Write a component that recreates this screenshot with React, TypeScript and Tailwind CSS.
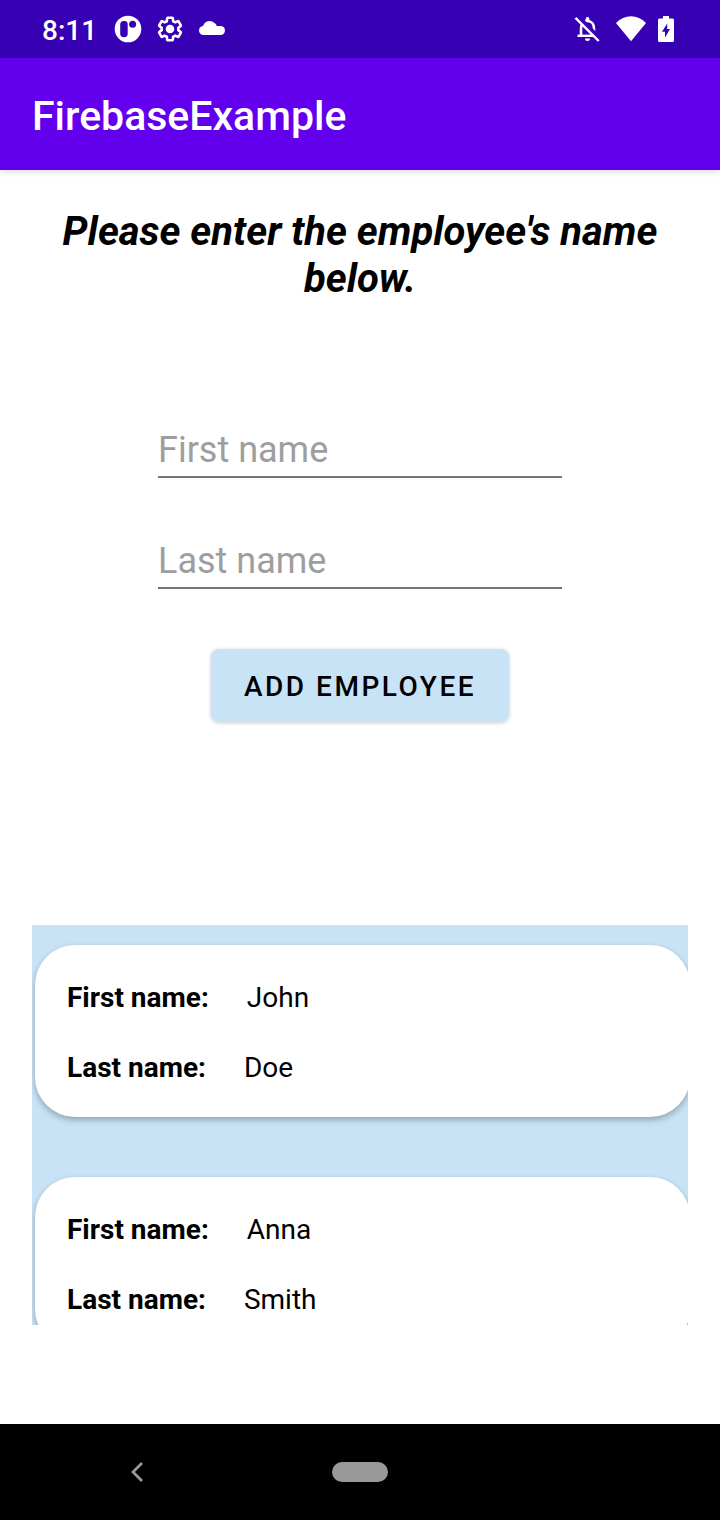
const employees = [
  { first: "John", last: "Doe" },
  { first: "Anna", last: "Smith" },
];

function StatusBar() {
  return (
    <header className="flex h-[58px] items-center justify-between bg-[#3700b3] pr-[46px] pl-[42px] text-white">
      <div className="flex items-center">
        <span className="w-[72px] pt-[3px] text-[28px] leading-8 font-medium">8:11</span>
        <svg className="mr-[14px] size-7" viewBox="0 0 28 28" aria-hidden="true">
          <circle cx="14" cy="14" r="13.3" fill="white" />
          <path d="M6.200 9.500Q6.200 6 9.700 6H10.500Q13.700 6 13.700 9.200V18.600A3.750 3.750 0 0 1 6.200 18.600Z" fill="#3700b3" />
          <circle cx="18.600" cy="9.300" r="3.500" fill="#3700b3" />
        </svg>
        <svg className="mr-[14px] size-7" viewBox="0 0 24 24" fill="none" aria-hidden="true">
          <path
            d="M19.430 12.980c.04-.32.07-.64.07-.98s-.03-.66-.07-.98l2.110-1.650c.19-.15.24-.42.120-.64l-2-3.460c-.12-.22-.39-.3-.61-.22l-2.490 1c-.52-.4-1.080-.73-1.690-.98l-.38-2.650A.488.488 0 0 0 14 2h-4c-.25 0-.46.18-.49.42l-.38 2.650c-.61.25-1.170.59-1.690.98l-2.490-1c-.23-.09-.49 0-.61.22l-2 3.460c-.13.22-.07.49.12.64l2.110 1.650c-.04.32-.07.65-.07.98s.03.66.07.98l-2.110 1.650c-.19.15-.24.42-.12.64l2 3.460c.12.22.39.3.61.22l2.490-1c.52.4 1.080.73 1.690.98l.38 2.650c.03.24.24.42.49.42h4c.25 0 .46-.18.49-.42l.38-2.650c.61-.25 1.170-.59 1.690-.98l2.490 1c.23.09.49 0 .61-.22l2-3.460c.12-.22.07-.49-.12-.64z"
            stroke="white"
            strokeWidth="2.300"
            transform="translate(12 12) scale(.96) translate(-12 -12)"
          />
          <circle cx="12" cy="12" r="3.700" fill="white" />
        </svg>
        <svg className="size-7" viewBox="0 0 28 28" fill="white" aria-hidden="true">
          <circle cx="5.500" cy="15.500" r="4.500" />
          <circle cx="11.600" cy="12.800" r="6.900" />
          <circle cx="22.500" cy="15.500" r="4.500" />
          <path d="M5.500 20V13L16.500 8Q18.300 9.200 18.800 11.100L22.500 11V20Z" />
        </svg>
      </div>
      <div className="flex items-center">
        <svg className="mr-4 h-[26px] w-[26px]" viewBox="0 0 26 26" fill="none" aria-hidden="true">
          <path d="M7 19V12.500C7 8 9.600 5 13.500 5S20 8 20 12.500V19" stroke="white" strokeWidth="2.600" />
          <path d="M3.500 19.800H23.500" stroke="white" strokeWidth="2.400" />
          <path d="M11.600 5V2.900a1.900 1.900 0 0 1 3.800 0V5Z" fill="white" />
          <path d="M11 22.500h5a2.500 2.500 0 0 1-5 0Z" fill="white" />
          <path d="M4 .5L27.500 24" stroke="#3700b3" strokeWidth="4" />
          <path d="M1.500 1.800L24.700 25" stroke="white" strokeWidth="2.400" />
        </svg>
        <svg className="mr-3 h-[26px] w-[30px]" viewBox="0 0 30 26" fill="white" aria-hidden="true">
          <path d="M0 7C8.500-1.900 21.500-1.900 30 7L15 25.300Z" />
        </svg>
        <svg className="h-[26px] w-4" viewBox="0 0 16 26" aria-hidden="true">
          <path d="M5 0h6v2.600h3.500Q16 2.600 16 4.100V24.500Q16 26 14.500 26H1.500Q0 26 0 24.500V4.100Q0 2.600 1.500 2.600H5Z" fill="white" />
          <path d="M9.200 7.600V13H12L7 21.600V15.800H4Z" fill="#3700b3" />
        </svg>
      </div>
    </header>
  );
}

function NameField({ label }: { label: string }) {
  return (
    <input
      type="text"
      aria-label={label}
      placeholder={label}
      className="h-[56px] w-full border-b-2 border-[#757575] pt-[2px] text-[36px] outline-none placeholder:text-[#9e9e9e]"
    />
  );
}

function DetailRow({ label, value }: { label: string; value: string }) {
  return (
    <div className="flex gap-[38px]">
      <dt className="font-bold">{label}</dt>
      <dd>{value}</dd>
    </div>
  );
}

export default function App() {
  return (
    <div className="flex min-h-screen flex-col bg-white font-[Roboto,sans-serif] text-black">
      <StatusBar />
      <div className="flex h-28 items-center bg-[#6200ee] px-8 pt-[6px] shadow-[0_2px_6px_rgba(0,0,0,0.14)]">
        <h1 className="text-[41px] font-medium text-white">FirebaseExample</h1>
      </div>
      <main className="flex grow flex-col items-center px-8 pt-[38px]">
        <h2 className="text-center text-[40px] leading-[47px] font-bold italic">
          Please enter the employee's name below.
        </h2>
        <form
          className="mt-[120px] flex w-full max-w-[404px] flex-col items-center"
          onSubmit={(event) => event.preventDefault()}
        >
          <NameField label="First name" />
          <div className="mt-[55px] w-full">
            <NameField label="Last name" />
          </div>
          <button
            type="submit"
            className="mt-[60px] h-[73px] rounded-lg bg-[#c8e3f5] px-[33px] pt-[2px] text-[28px] font-medium tracking-[0.09em] shadow-[0_1px_4px_rgba(0,0,0,0.2)]"
          >
            ADD EMPLOYEE
          </button>
        </form>
        <ul className="mt-[203px] flex h-[400px] w-full flex-col gap-[60px] overflow-hidden bg-[#c8e3f5] pt-5 pl-[3px]">
          {employees.map((employee) => (
            <li
              key={employee.first}
              className="-mr-[2px] shrink-0 rounded-[40px] bg-white px-8 pt-8 pb-7 text-[28px] leading-[42px] shadow-[0_3px_6px_rgba(0,0,0,0.28)]"
            >
              <dl className="flex flex-col gap-7">
                <DetailRow label="First name:" value={employee.first} />
                <DetailRow label="Last name:" value={employee.last} />
              </dl>
            </li>
          ))}
        </ul>
      </main>
      <nav className="grid h-24 grid-cols-3 place-items-center bg-black px-[26px]">
        <button type="button" aria-label="Back" className="p-2">
          <svg className="h-5 w-3" viewBox="0 0 12 20" fill="none" aria-hidden="true">
            <path d="M11 1L2 10L11 19" stroke="#999999" strokeWidth="2.800" />
          </svg>
        </button>
        <button type="button" aria-label="Home" className="h-5 w-14 rounded-full bg-[#999999]" />
      </nav>
    </div>
  );
}
